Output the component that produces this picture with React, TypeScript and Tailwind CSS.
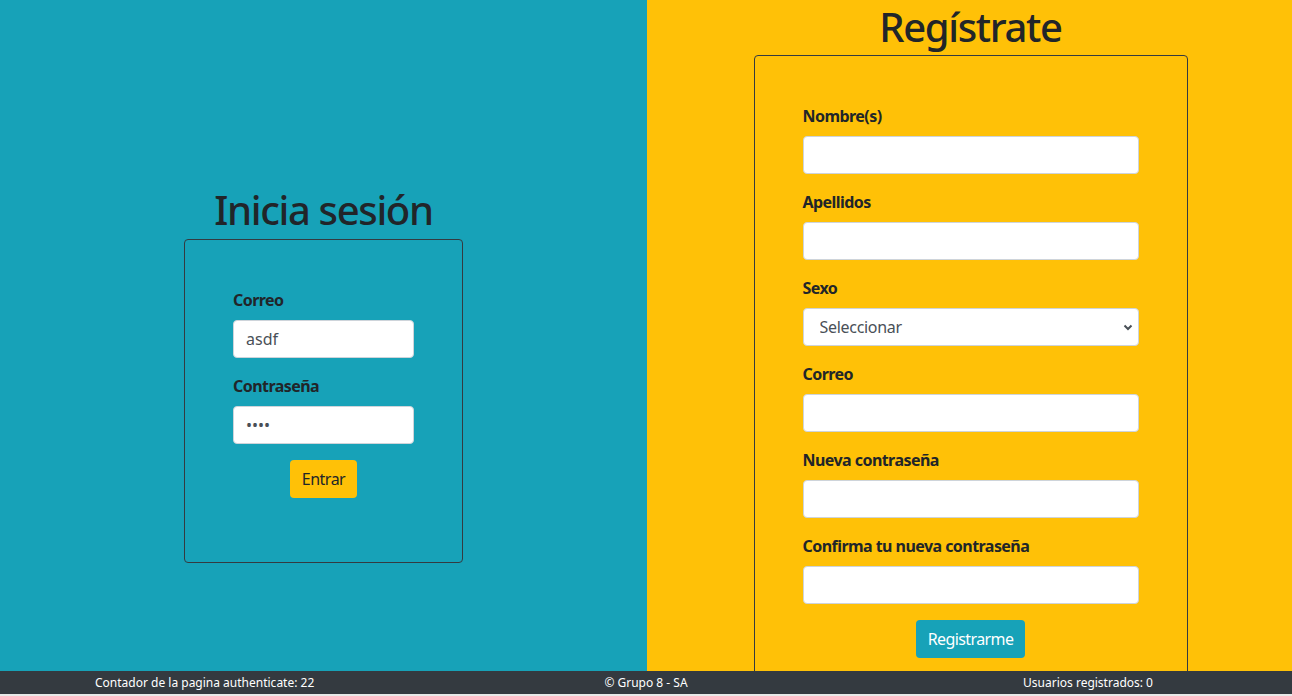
import React from "react";

const font = { fontFamily: '"Noto Sans", "Open Sans", Arial, sans-serif' };

function Field({ label, value, type = "text", select = false }: { label: string; value?: string; type?: string; select?: boolean }) {
  return (
    <div className="mb-4">
      <label className="block font-bold text-[16px] leading-6 tracking-[-0.55px] text-[#212529] mb-2">{label}</label>
      {select ? (
        <div className="relative">
          <select className="appearance-none w-full h-[38px] bg-white border border-[#ced4da] rounded pl-[16px] text-[16px] tracking-[-0.3px] text-[#495057]">
            <option>Seleccionar</option>
          </select>
          <svg className="absolute right-[6px] top-[16px]" width="10" height="7" viewBox="0 0 10 7">
            <path d="M1.5 1.5 L5 5 L8.5 1.5" fill="none" stroke="#495057" strokeWidth="2" />
          </svg>
        </div>
      ) : (
        <input
          type={type}
          defaultValue={value}
          className="block w-full h-[38px] bg-white border border-[#ced4da] rounded px-3 text-[16px] text-[#495057] outline-none"
        />
      )}
    </div>
  );
}

export default function App() {
  return (
    <div className="h-screen overflow-hidden relative" style={font}>
      <div className="flex">
        <div className="w-[647px] h-[745px] bg-[#17a2b8] flex flex-col items-center justify-center">
          <h1 className="text-[40px] leading-[1.2] font-[550] tracking-[-1.35px] text-[#212529] pt-[3px] mb-[5px]">Inicia sesión</h1>
          <div className="w-[279px] border border-[#343a40] rounded p-12">
            <Field label="Correo" value="asdf" />
            <Field label="Contraseña" value="asdf" type="password" />
            <div className="mb-4 flex justify-center">
              <button className="h-[38px] px-3 rounded bg-[#ffc107] text-[#212529] text-[16px] tracking-[-0.5px]">Entrar</button>
            </div>
          </div>
        </div>
        <div className="flex-1 h-[745px] bg-[#ffc107] flex flex-col items-center">
          <h1 className="text-[40px] leading-[1.2] font-[550] tracking-[-1.35px] text-[#212529] pt-[3px] mb-[4px] ml-[2px]">Regístrate</h1>
          <div className="w-[434px] ml-[2px] border border-[#343a40] rounded p-12">
            <Field label="Nombre(s)" />
            <Field label="Apellidos" />
            <Field label="Sexo" select />
            <Field label="Correo" />
            <Field label="Nueva contraseña" type="password" />
            <Field label="Confirma tu nueva contraseña" type="password" />
            <div className="mb-4 flex justify-center">
              <button className="h-[38px] px-3 rounded bg-[#17a2b8] text-white text-[16px] tracking-[-0.6px]">Registrarme</button>
            </div>
          </div>
        </div>
      </div>
      <div className="fixed left-0 right-0 bottom-0">
        <div className="h-[23px] bg-[#343a40] text-white text-[12px] grid grid-cols-[1fr_auto_1fr] items-center">
          <div className="pl-[95px]">Contador de la pagina authenticate: 22</div>
          <div>© Grupo 8 - SA</div>
          <div className="text-right pr-[139px]">Usuarios registrados: 0</div>
        </div>
        <div className="h-[2px] bg-[#e8e8e8]" />
      </div>
    </div>
  );
}
